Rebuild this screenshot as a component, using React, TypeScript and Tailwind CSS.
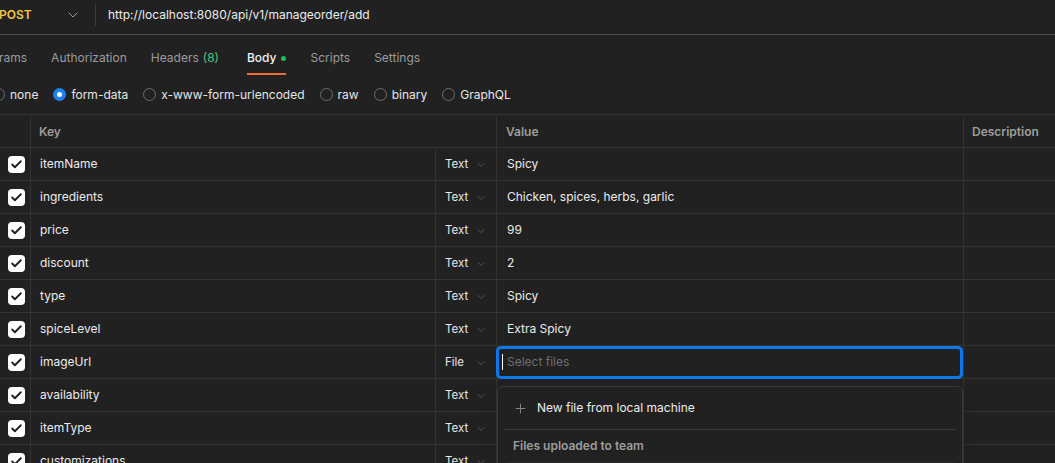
import { ChevronDown, Check, Plus } from "lucide-react";

const rows = [
  { key: "itemName", type: "Text", value: "Spicy" },
  { key: "ingredients", type: "Text", value: "Chicken, spices, herbs, garlic" },
  { key: "price", type: "Text", value: "99" },
  { key: "discount", type: "Text", value: "2" },
  { key: "type", type: "Text", value: "Spicy" },
  { key: "spiceLevel", type: "Text", value: "Extra Spicy" },
  { key: "imageUrl", type: "File", value: "", active: true },
  { key: "availability", type: "Text", value: "" },
  { key: "itemType", type: "Text", value: "" },
  { key: "customizations", type: "Text", value: "" },
];

const tabs = ["rams", "Authorization", "Headers", "Body", "Scripts", "Settings"];
const bodyModes = ["none", "form-data", "x-www-form-urlencoded", "raw", "binary", "GraphQL"];

export default function App() {
  return (
    <div className="relative w-[1055px] h-[463px] overflow-hidden bg-[#212121] text-[#e6e6e6] text-[12px] font-['Inter','Liberation_Sans',sans-serif]">
      {/* url bar */}
      <div className="h-[35px] pb-[4px] flex items-center border-b border-[#4d4d4d]">
        <span className="w-[64px] font-semibold text-[#f6c445] -ml-[1px]">POST</span>
        <ChevronDown className="w-4 h-4 text-[#9a9a9a] ml-[2px]" strokeWidth={1.5} />
        <div className="w-px h-[22px] bg-[#3a3a3a] ml-[14px]" />
        <span className="ml-[12px] text-[#ededed]">http://localhost:8080/api/v1/manageorder/add</span>
      </div>

      {/* tabs */}
      <div className="h-[40px] flex items-stretch gap-[24px]">
        {tabs.map((t) => (
          <div
            key={t}
            className={`flex items-center pt-[8px] border-b-2 ${
              t === "Body" ? "border-[#ed6c35] text-[#f2f2f2] font-medium" : "border-transparent text-[#9c9c9c]"
            } ${t === "rams" ? "-ml-[1px]" : ""} ${t === "Body" ? "ml-[4px]" : ""}`}
          >
            {t}
            {t === "Headers" && <span className="ml-[4px] text-[#4cc38a]">(8)</span>}
            {t === "Body" && <span className="ml-[5px] w-[5px] h-[5px] rounded-full bg-[#1fbd5e]" />}
          </div>
        ))}
      </div>

      {/* body mode radios */}
      <div className="h-[39px] flex items-center gap-[15px] -ml-[8px]">
        {bodyModes.map((m) => (
          <label key={m} className="flex items-center gap-[5px] text-[#e6e6e6]">
            {m === "form-data" ? (
              <span className="w-[13px] h-[13px] rounded-full bg-[#1f7ff0] flex items-center justify-center">
                <span className="w-[5px] h-[5px] rounded-full bg-white" />
              </span>
            ) : (
              <span className="w-[13px] h-[13px] rounded-full border border-[#6e6e6e]" />
            )}
            {m}
          </label>
        ))}
      </div>

      {/* table */}
      <div className="border-t border-[#333333]">
        <div className="h-[33px] pt-[1px] flex border-b border-[#333333] font-semibold text-[#9d9d9d]">
          <div className="w-[31px] border-r border-[#333333]" />
          <div className="w-[466px] border-r border-[#333333] flex items-center pl-[8px]">Key</div>
          <div className="w-[467px] border-r border-[#333333] flex items-center pl-[9px]">Value</div>
          <div className="flex-1 flex items-center pl-[8px]">Description</div>
        </div>
        {rows.map((r) => (
          <div key={r.key} className="h-[33px] flex border-b border-[#333333]">
            <div className="w-[31px] border-r border-[#333333] flex items-center justify-center pl-[2px]">
              <span className="w-[17px] h-[17px] rounded-[4px] bg-white flex items-center justify-center">
                <Check className="w-[13px] h-[13px] text-[#212121]" strokeWidth={3.5} />
              </span>
            </div>
            <div className="w-[405px] border-r border-[#333333] flex items-center pl-[9px] text-[#ececec]">
              {r.key}
            </div>
            <div className="w-[61px] border-r border-[#333333] flex items-center pl-[9px] pt-[1px] text-[11.5px] text-[#e6e6e6]">
              <span className="w-[30px]">{r.type}</span>
              <ChevronDown className="w-[12px] h-[12px] text-[#666666]" strokeWidth={1.5} />
            </div>
            <div className="w-[467px] border-r border-[#333333] flex items-center">
              {r.active ? (
                <div className="w-[468px] h-[33px] -ml-px rounded-[5px] border-[3px] border-[#0b79ec] flex items-center pl-[3px] text-[#6f6f6f]">
                  <span className="w-px h-[16px] bg-white mr-[4px]" />
                  Select files
                </div>
              ) : (
                <span className="pl-[10px] text-[#ececec]">{r.value}</span>
              )}
            </div>
            <div className="flex-1" />
          </div>
        ))}
      </div>

      {/* file picker dropdown */}
      <div className="absolute left-[497px] top-[386px] w-[466px] h-[90px] bg-[#212121] border border-[#3a3a3a] rounded-t-[6px] shadow-lg px-[6px]">
        <div className="h-[43px] flex items-center pl-[9px] border-b border-[#3a3a3a] text-[#ededed]">
          <Plus className="w-[15px] h-[15px] text-[#8a8a8a] mr-[9px]" strokeWidth={1.5} />
          New file from local machine
        </div>
        <div className="h-[32px] flex items-center pl-[9px] font-semibold text-[#9d9d9d]">Files uploaded to team</div>
        <div className="h-[6px] bg-[#2a2a2a] rounded-t-[4px]" />
      </div>
    </div>
  );
}
